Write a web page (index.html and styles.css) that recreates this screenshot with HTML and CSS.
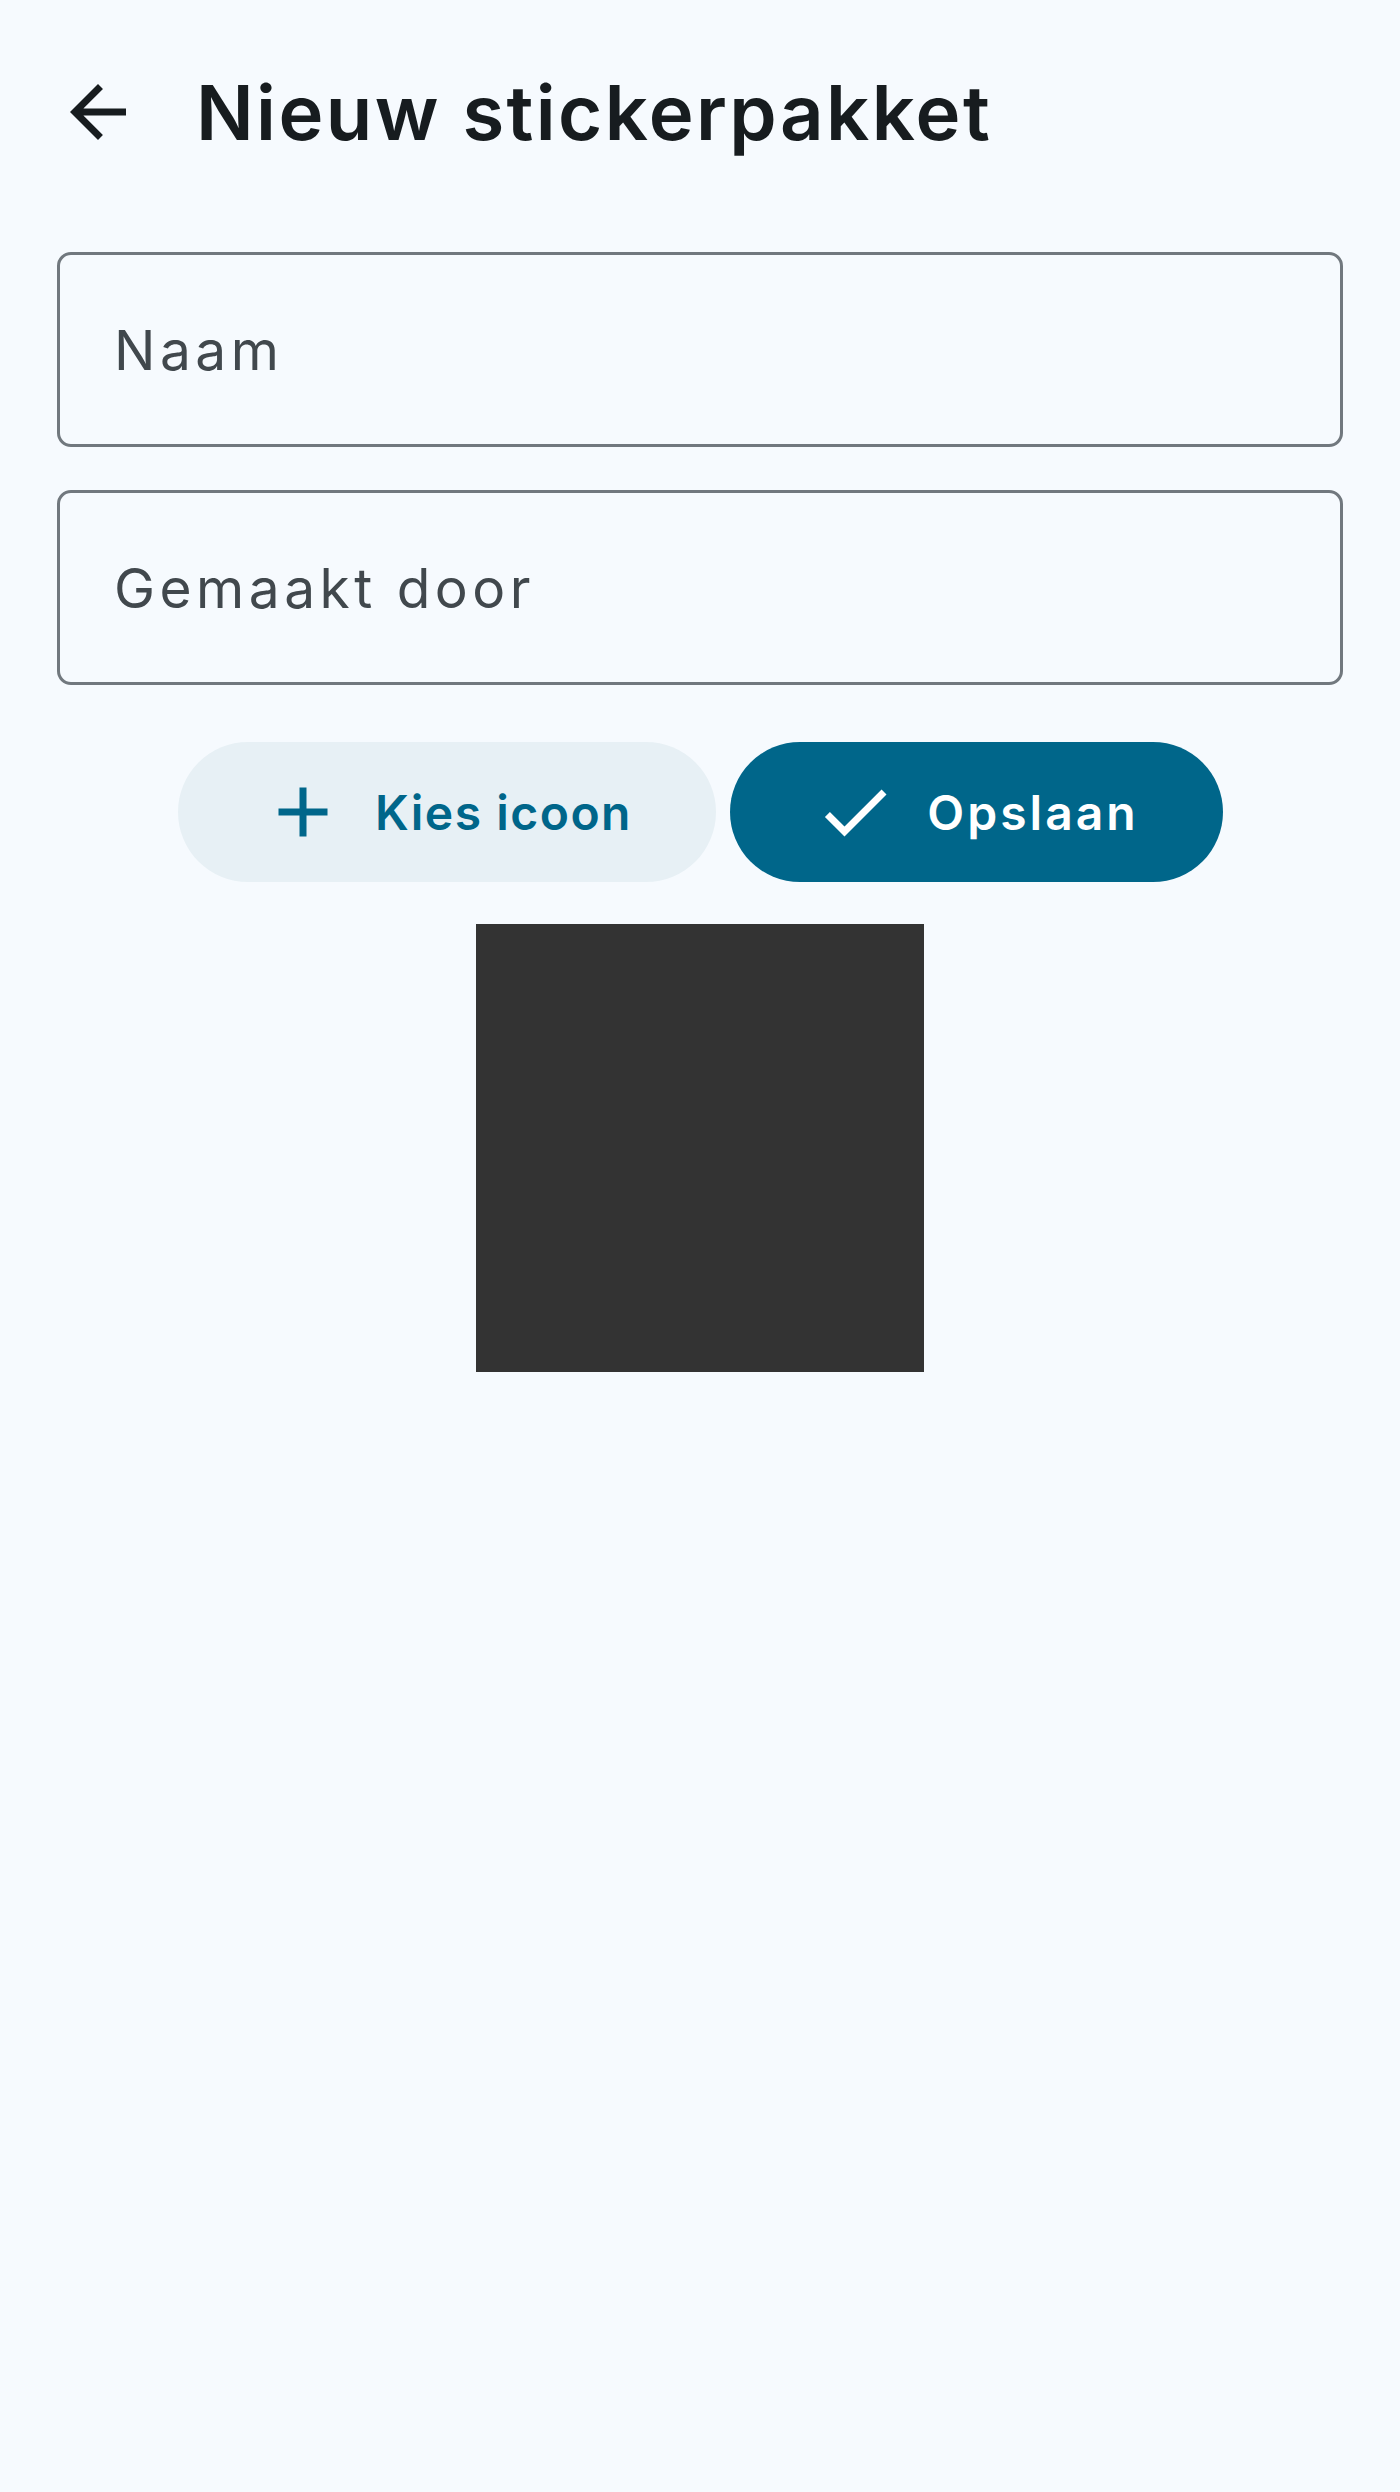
FILE: index.html
```html
<!DOCTYPE html>
<html lang="nl">
<head>
<meta charset="utf-8">
<title>Nieuw stickerpakket</title>
<link rel="stylesheet" href="styles.css">
</head>
<body>
<div class="screen">
  <header class="topbar">
    <button class="icon-btn" aria-label="Terug">
      <svg viewBox="0 0 24 24" width="84" height="84"><path fill="#171c1f" d="M20 11H7.83l5.59-5.59L12 4l-8 8 8 8 1.41-1.41L7.83 13H20v-2z"/></svg>
    </button>
    <h1 class="title">Nieuw stickerpakket</h1>
  </header>
  <main class="form">
    <div class="field"><span class="label">Naam</span></div>
    <div class="field"><span class="label">Gemaakt door</span></div>
    <div class="actions">
      <button class="btn btn-tonal">
        <svg viewBox="0 0 24 24" width="84" height="84"><path fill="currentColor" d="M19 13h-6v6h-2v-6H5v-2h6V5h2v6h6v2z"/></svg>
        <span>Kies icoon</span>
      </button>
      <button class="btn btn-filled">
        <svg viewBox="0 0 24 24" width="84" height="84"><path fill="currentColor" d="M9 16.17L4.83 12l-1.42 1.41L9 19 21 7l-1.41-1.41z"/></svg>
        <span>Opslaan</span>
      </button>
    </div>
    <div class="preview"></div>
  </main>
</div>
</body>
</html>
```
FILE: styles.css
```css
* { box-sizing: border-box; }
html, body {
  margin: 0;
  padding: 0;
  background: #f6fafe;
}
body {
  font-family: Inter, "Noto Sans", sans-serif;
  color: #171c1f;
}
.screen {
  width: 1400px;
  min-height: 2492px;
  background: #f6fafe;
}
.topbar {
  display: flex;
  align-items: center;
  height: 84px;
  margin-top: 70px;
  padding-left: 56px;
  gap: 56px;
}
.icon-btn {
  width: 84px;
  height: 84px;
  padding: 0;
  border: 0;
  background: none;
  display: flex;
}
.title {
  margin: 0;
  font-size: 76px;
  font-weight: 600;
  letter-spacing: 2.4px;
  color: #171c1f;
  line-height: 1;
}
.form {
  display: flex;
  flex-direction: column;
  align-items: center;
  padding: 98px 57px 0;
}
.field {
  width: 100%;
  height: 195px;
  border: 3px solid #71787e;
  border-radius: 14px;
  display: flex;
  align-items: center;
  padding-left: 54px;
  margin-bottom: 43px;
}
.field + .field { margin-bottom: 57px; }
.label {
  font-size: 55px;
  font-weight: 400;
  letter-spacing: 4.5px;
  color: #41484d;
}
.actions {
  display: flex;
  gap: 14px;
  justify-content: center;
}
.btn {
  height: 140px;
  border: 0;
  border-radius: 70px;
  display: flex;
  align-items: center;
  justify-content: center;
  gap: 30px;
  font-family: Inter, "Noto Sans", sans-serif;
  font-size: 48px;
  font-weight: 600;
  letter-spacing: 1.5px;
  padding: 0;
}
.btn-tonal {
  width: 538px;
  background: #e7f0f5;
  color: #00668a;
}
.btn-filled {
  width: 493px;
  background: #00668a;
  color: #ffffff;
  letter-spacing: 3px;
}
.preview {
  width: 448px;
  height: 448px;
  background: #333333;
  margin-top: 42px;
}
```
